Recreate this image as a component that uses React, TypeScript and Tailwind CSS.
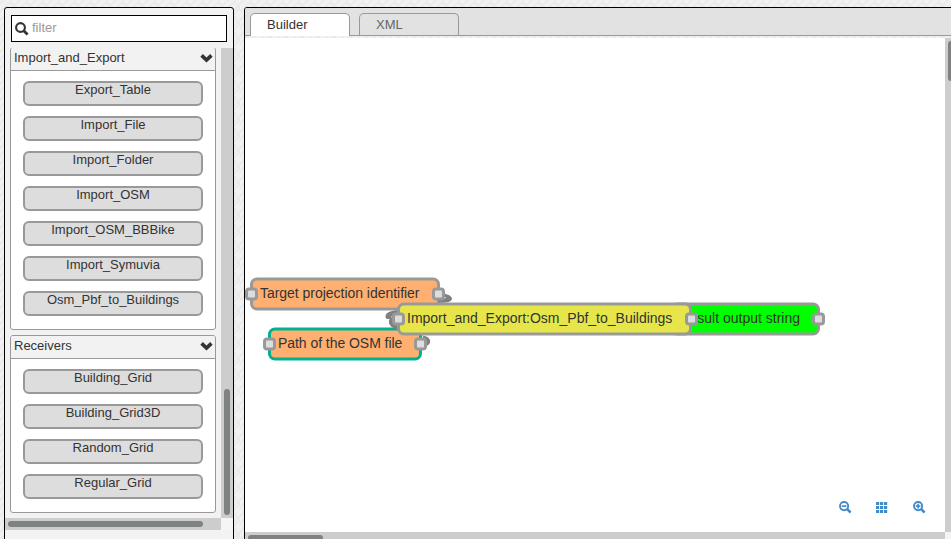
import React from "react";

function Group({ title, items }: { title: string; items: string[] }) {
  return (
    <section className="ml-[5px] w-[206px] shrink-0 rounded-[3px] border border-[#999] bg-white pb-[13px]">
      <header className="flex h-[23px] justify-between rounded-t-[2px] border-b border-[#999] bg-[#f2f2f2] pl-[3px] pr-[2px]">
        <span className="pt-[2px] leading-[15px]">{title}</span>
        <svg width="13" height="10" viewBox="0 0 13 10" className="mt-[5px]">
          <path d="M1.6 2.4 L6.5 7 L11.4 2.4" fill="none" stroke="#333" strokeWidth="3.7" />
        </svg>
      </header>
      <div className="flex flex-col gap-[10px] px-[12px] pt-[10px]">
        {items.map((t) => (
          <div
            key={t}
            className="h-[25px] rounded-[6px] border-2 border-[#999] bg-[#ddd] text-center leading-[15px]"
          >
            <span className="relative -top-px">{t}</span>
          </div>
        ))}
      </div>
    </section>
  );
}

function Port({ className }: { className: string }) {
  return (
    <i className={`absolute box-border h-[13px] w-[13px] rounded-[4px] border-[3px] border-[#999] bg-[#ddd] ${className}`} />
  );
}

function Magnifier({ plus }: { plus?: boolean }) {
  return (
    <svg width="13" height="13" viewBox="0 0 13 13" fill="none" stroke="#428bca">
      <circle cx="5.1" cy="5.1" r="4.1" strokeWidth="1.9" />
      <path d="M8.2 8.2 L11.6 11.5" strokeWidth="2.5" />
      <path d="M2.8 5.1 H7.4" strokeWidth="1.7" />
      {plus && <path d="M5.1 2.8 V7.4" strokeWidth="1.7" />}
    </svg>
  );
}

export default function App() {
  return (
    <div className="relative h-[539px] w-[951px] overflow-hidden bg-[#f1f1f1] font-['Liberation_Sans',Arial,sans-serif] text-[13px] text-[#333]">
      <svg className="absolute inset-0" width="951" height="539">
        <defs>
          <pattern id="weave" width="16" height="16" patternUnits="userSpaceOnUse">
            <path
              d="M-2 6 L6 -2 M-2 14 L6 6 L10 10 M2 18 L10 10 M6 6 L12 0 M10 2 L18 10 M10 10 L18 2 M8 16 L18 6 M4 12 L8 16"
              fill="none"
              stroke="#e9e9e9"
              strokeWidth="1.7"
            />
          </pattern>
        </defs>
        <rect width="951" height="539" fill="url(#weave)" />
      </svg>

      <div className="relative flex h-full gap-[10px] pl-[4px] pt-[7px]">
        <aside className="flex h-[540px] w-[230px] shrink-0 flex-col rounded-t-[3px] border border-black bg-[#f2f2f2]">
          <label className="ml-[6px] mt-[7px] flex h-[27px] w-[216px] shrink-0 items-center border border-black bg-white pl-[3px]">
            <svg width="14" height="14" viewBox="0 0 14 14" fill="none" stroke="#333">
              <circle cx="5.5" cy="5.5" r="4.4" strokeWidth="2.1" />
              <path d="M8.7 8.7 L12.6 12.4" strokeWidth="2.8" />
            </svg>
            <span className="mb-[2px] ml-[3px] text-[#999]">filter</span>
          </label>
          <div className="mt-[6px] flex h-[470px] shrink-0">
            <div className="w-[216px] overflow-hidden">
              <div className="-mt-[1px] flex flex-col gap-[5px]">
                <Group
                  title="Import_and_Export"
                  items={["Export_Table", "Import_File", "Import_Folder", "Import_OSM", "Import_OSM_BBBike", "Import_Symuvia", "Osm_Pbf_to_Buildings"]}
                />
                <Group title="Receivers" items={["Building_Grid", "Building_Grid3D", "Random_Grid", "Regular_Grid"]} />
              </div>
            </div>
            <div className="flex w-[12px] flex-col items-center justify-end bg-[#cdcdcd] pb-[3px]">
              <div className="h-[126px] w-[6px] rounded-full bg-[#7e8282]" />
            </div>
          </div>
          <div className="flex h-[12px] shrink-0">
            <div className="flex w-[216px] items-center bg-[#cdcdcd] pl-[3px]">
              <div className="h-[6px] w-[195px] rounded-full bg-[#7e8282]" />
            </div>
            <div className="w-[12px] bg-[#f6f5f4]" />
          </div>
        </aside>

        <main className="flex h-[540px] w-[720px] shrink-0 flex-col rounded-tl-[3px] border border-black">
          <nav className="flex h-[28px] shrink-0 gap-[9px] rounded-tl-[2px] border-b border-[#999] bg-[#e2e2e2] pl-[5px] pt-[5px]">
            <div className="h-[23px] w-[100px] rounded-t-[5px] border border-b-0 border-[#999] bg-white pl-[16px] leading-[21px]">
              Builder
            </div>
            <div className="h-[22px] w-[100px] rounded-t-[5px] border border-b-0 border-[#999] pl-[16px] leading-[21px] text-[#666]">
              XML
            </div>
          </nav>
          <div className="mt-[2px] flex h-[494px] shrink-0">
            <div className="relative w-[700px] bg-white text-[14px]">
              <div className="absolute inset-0 translate-y-[0.5px]">
                <div className="absolute left-[5px] top-[239px] h-[33px] w-[190px] whitespace-nowrap rounded-[7px] border-[3px] border-[#999] bg-[#ffb070] pl-[7px] leading-[24px] tracking-[-0.03px]">
                  Target projection identifier
                </div>
                <div className="absolute left-[23px] top-[289px] h-[33px] w-[154px] whitespace-nowrap rounded-[7px] border-[3px] border-[#00b090] bg-[#ffb070] pl-[7px] leading-[24px] tracking-[-0.05px]">
                  Path of the OSM file
                </div>
                <svg className="absolute inset-0" width="700" height="494" fill="#808080">
                  <path d="M196 254 C201 256 206 256 207 260 C207 264 199 265 193 264 L193 260 C197 261 201 260 201 259 C200 258 198 258 195 258 Z" />
                  <path d="M157 272 C149 271 140 273 140.5 278.5 C141 281 144 281 145 280 C142 284 145 289 152 291 L153 277 C149 277 147 279 146 279 C147 276 151 276 157 276 Z" />
                  <path d="M178 297 C183 298 186 301 185 304 C184 307 181 308 177 309 Z" />
                </svg>
                <Port className="left-0 top-[249px]" />
                <Port className="left-[187px] top-[249px]" />
                <Port className="left-[18px] top-[299px]" />
                <Port className="left-[169px] top-[299px]" />
                <div className="absolute left-[425px] top-[264px] h-[33px] w-[150px] whitespace-nowrap rounded-[7px] border-[3px] border-[#999] bg-[#00ff00] pr-[17px] text-right leading-[24px]">
                  Result output string
                </div>
                <Port className="left-[567px] top-[274px]" />
                <div className="absolute left-[152px] top-[264px] h-[33px] w-[295px] whitespace-nowrap rounded-[7px] border-[3px] border-[#999] bg-[#e6e64a] pl-[7px] leading-[24px]">
                  Import_and_Export:Osm_Pbf_to_Buildings
                </div>
                <Port className="left-[147px] top-[274px]" />
                <Port className="left-[440px] top-[274px]" />
              </div>
              <div className="absolute left-[594px] top-[463px] flex w-[87px] justify-between">
                <Magnifier />
                <svg width="12" height="11" viewBox="0 0 12 11" fill="#428bca" className="-ml-[1px] mt-[1px]">
                  {[0, 4, 8].map((y) => [0, 4, 8].map((x) => <rect key={`${x}-${y}`} x={x} y={y} width="3.2" height="3" />))}
                </svg>
                <Magnifier plus />
              </div>
            </div>
            <div className="w-[18px] bg-[#cdcdcd] pl-[3px] pt-[3px]">
              <div className="h-[40px] w-[6px] rounded-full bg-[#7e8282]" />
            </div>
          </div>
          <div className="flex h-[12px] shrink-0">
            <div className="w-[700px] bg-[#cdcdcd] pl-[3px] pt-[3px]">
              <div className="h-[6px] w-[75px] rounded-full bg-[#7e8282]" />
            </div>
            <div className="w-[18px] bg-[#f6f5f4]" />
          </div>
        </main>
      </div>
    </div>
  );
}
